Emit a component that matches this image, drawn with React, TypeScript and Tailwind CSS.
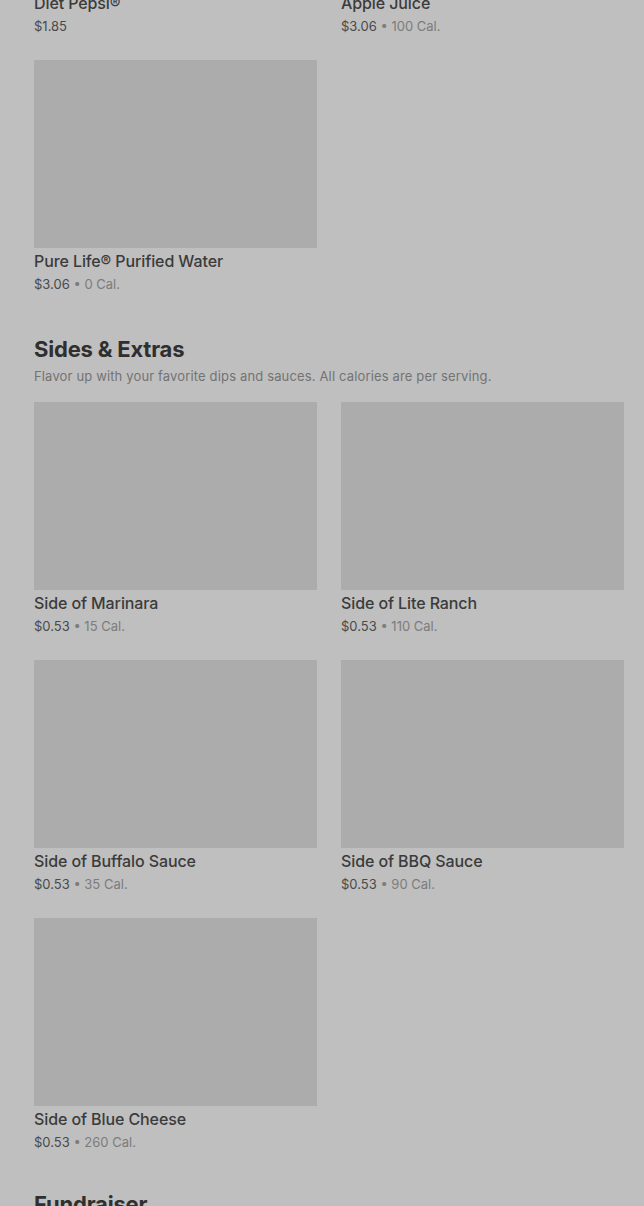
type Item = { name: string; price: string; cal?: string };

const drinks: Item[] = [
  { name: 'Diet Pepsi®', price: '$1.85' },
  { name: 'Apple Juice', price: '$3.06', cal: '100 Cal.' },
  { name: 'Pure Life® Purified Water', price: '$3.06', cal: '0 Cal.' },
];

const sides: Item[] = [
  { name: 'Side of Marinara', price: '$0.53', cal: '15 Cal.' },
  { name: 'Side of Lite Ranch', price: '$0.53', cal: '110 Cal.' },
  { name: 'Side of Buffalo Sauce', price: '$0.53', cal: '35 Cal.' },
  { name: 'Side of BBQ Sauce', price: '$0.53', cal: '90 Cal.' },
  { name: 'Side of Blue Cheese', price: '$0.53', cal: '260 Cal.' },
];

function Card({ item }: { item: Item }) {
  return (
    <div className="flex flex-col">
      <div className="h-[188px] bg-[#acacac]" />
      <div className="mt-[3px] text-[16px] leading-[20px] font-medium tracking-[-0.1px] text-[#3b3b3b]">{item.name}</div>
      <div className="mt-1 text-[13px] leading-[18px] text-[#4a4a4a]">
        {item.price}
        <span className="text-[#7c7c7c]">{item.cal ? ` • ${item.cal}` : ''}</span>
      </div>
    </div>
  );
}

function Grid({ items }: { items: Item[] }) {
  return (
    <div className="grid grid-cols-2 gap-x-6 gap-y-[25px]">
      {items.map((it) => (
        <Card key={it.name} item={it} />
      ))}
    </div>
  );
}

export default function App() {
  return (
    <div
      className="h-[1206px] overflow-hidden bg-[#bfbfbf]"
      style={{ fontFamily: 'Inter, "Noto Sans", sans-serif' }}
    >
      <div className="-mt-[198px] pl-[34px] pr-5">
        <Grid items={drinks} />

        {/* Sides & Extras */}
        <h2 className="mt-[42px] text-[22px] leading-[28px] font-bold tracking-[-0.2px] text-[#2f2f2f]">
          Sides & Extras
        </h2>
        <p className="mt-1 text-[13px] leading-[18px] tracking-[0.15px] text-[#737373]">
          Flavor up with your favorite dips and sauces. All calories are per serving.
        </p>
        <div className="mt-[17px]">
          <Grid items={sides} />
        </div>

        <h2 className="mt-[39px] text-[22px] leading-[28px] font-bold tracking-[-0.2px] text-[#2f2f2f]">
          Fundraiser
        </h2>
      </div>
    </div>
  );
}
